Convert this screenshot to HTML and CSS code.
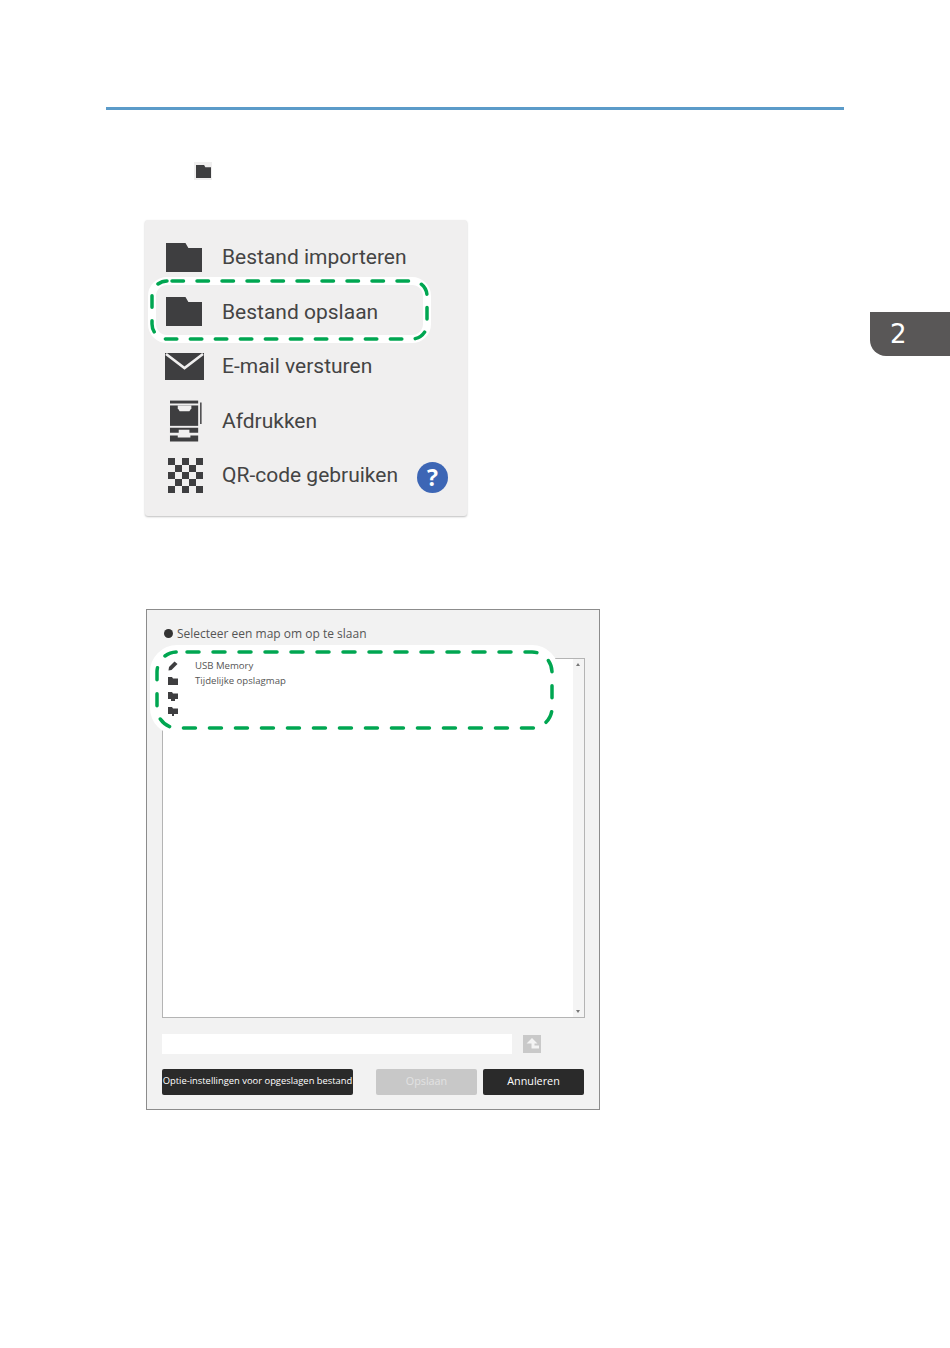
FILE: index.html
```html
<!DOCTYPE html>
<html lang="nl">
<head>
    <meta charset="UTF-8">
    <title>Bestand opslaan</title>
    <link rel="stylesheet" href="styles.css">
</head>
<body>
    <svg class="defs" width="0" height="0">
        <symbol id="folder" viewBox="0 0 37 29" preserveAspectRatio="none">
            <path d="M0 0H20L23 5H37V29H0Z"/>
        </symbol>
    </svg>

    <div class="page">
        <div class="rule"></div>

        <div class="step-icon">
            <svg class="icon-small"><use href="#folder"/></svg>
        </div>

        <div class="menu">
            <div class="menu-row">
                <span class="menu-icon"><svg class="icon-folder"><use href="#folder"/></svg></span>
                <span class="menu-text">Bestand importeren</span>
            </div>
            <div class="menu-row">
                <span class="menu-icon"><svg class="icon-folder"><use href="#folder"/></svg></span>
                <span class="menu-text">Bestand opslaan</span>
            </div>
            <div class="menu-row">
                <span class="menu-icon">
                    <svg class="icon-mail" viewBox="0 0 39 27">
                        <path d="M0 0H39V27H0Z"/>
                        <path d="M1 1L19.5 15L38 1" fill="none" stroke="#f0efef" stroke-width="2.6"/>
                    </svg>
                </span>
                <span class="menu-text">E-mail versturen</span>
            </div>
            <div class="menu-row">
                <span class="menu-icon">
                    <svg class="icon-print" viewBox="0 0 36 42">
                        <path d="M1 0H30V3H1Z"/>
                        <path d="M1 5H30V26H1Z"/>
                        <path d="M9 5H23V8L21 11H11L9 8Z" fill="#f0efef"/>
                        <path d="M32 2H33.5V24H32Z"/>
                        <path d="M1 28H30V33H21V30H10V33H1Z"/>
                        <path d="M1 36H9V38H22V36H30V42H1Z"/>
                    </svg>
                </span>
                <span class="menu-text">Afdrukken</span>
            </div>
            <div class="menu-row">
                <span class="menu-icon">
                    <svg class="icon-qr" viewBox="0 0 5 5">
                        <path d="M0 0H1V1H0ZM2 0H3V1H2ZM4 0H5V1H4ZM1 1H2V2H1ZM3 1H4V2H3ZM0 2H1V3H0ZM2 2H3V3H2ZM4 2H5V3H4ZM1 3H2V4H1ZM3 3H4V4H3ZM0 4H1V5H0ZM2 4H3V5H2ZM4 4H5V5H4Z"/>
                    </svg>
                </span>
                <span class="menu-text">QR-code gebruiken</span>
                <span class="help">?</span>
            </div>
        </div>

        <div class="dialog">
            <div class="dialog-title"><span class="dot"></span>Selecteer een map om op te slaan</div>
            <div class="list">
                <div class="list-items">
                    <div class="list-row">
                        <svg class="row-icon" viewBox="0 0 10 10"><path d="M6.5 0.5L9.5 3L3.5 9L0.5 9.5L1 6Z"/></svg>
                        <span class="row-text">USB Memory</span>
                    </div>
                    <div class="list-row">
                        <svg class="row-icon" viewBox="0 0 10 8"><path d="M0 0H4L5 1.5H10V8H0Z"/></svg>
                        <span class="row-text">Tijdelijke opslagmap</span>
                    </div>
                    <div class="list-row">
                        <svg class="row-icon" viewBox="0 0 10 10"><path d="M0 1H4L5 2.5H10V8H7V10H3V8H0Z"/></svg>
                    </div>
                    <div class="list-row">
                        <svg class="row-icon" viewBox="0 0 10 10"><path d="M0 1H4L5 2.5H10V8H6V10H4V8H0Z"/></svg>
                    </div>
                </div>
                <div class="scrollbar">
                    <span class="arrow-up"></span>
                    <span class="arrow-down"></span>
                </div>
            </div>
            <div class="path-row">
                <div class="path-input"></div>
                <div class="up-btn">
                    <svg viewBox="0 0 18 18"><path d="M9 3L14.5 8.5H11.5V10.5H16V13.5H8.5V8.5H3.5Z" fill="#f4f4f4"/></svg>
                </div>
            </div>
            <div class="btn-row">
                <div class="btn btn-options">Optie-instellingen voor opgeslagen bestand</div>
                <div class="btn btn-off">Opslaan</div>
                <div class="btn btn-cancel">Annuleren</div>
            </div>
        </div>

        <svg class="mark mark-menu" width="289" height="72" viewBox="0 0 289 72">
            <rect class="halo" x="7" y="7" width="275" height="58" rx="15"/>
            <rect class="dash" x="7" y="7" width="275" height="58" rx="15"/>
        </svg>
        <svg class="mark mark-list" width="409" height="90" viewBox="0 0 409 90">
            <rect class="halo" x="7" y="7" width="395" height="76" rx="20"/>
            <rect class="dash" x="7" y="7" width="395" height="76" rx="20"/>
        </svg>

        <div class="chapter-tab">2</div>
    </div>
</body>
</html>
```

FILE: styles.css
```css
body {
    margin: 0;
    background-color: #fff;
    font-family: "Open Sans", "Noto Sans", sans-serif;
}

.defs {
    position: absolute;
}

.page {
    position: relative;
    width: 950px;
    height: 1348px;
    overflow: hidden;
    padding-top: 107px;
    box-sizing: border-box;
}

.rule {
    height: 3px;
    margin: 0 106px;
    background-color: #5b9bc9;
}

.step-icon {
    display: flex;
    align-items: center;
    justify-content: center;
    width: 18px;
    height: 18px;
    margin: 52px 0 0 194px;
    background-color: #f0efef;
}

.icon-small {
    width: 15px;
    height: 13px;
    fill: #3e3e40;
}

.menu {
    width: 322px;
    height: 296px;
    margin: 40px 0 0 145px;
    padding-top: 10px;
    box-sizing: border-box;
    background-color: #f0efef;
    border-radius: 3px;
    box-shadow: 0 1px 2px rgba(0, 0, 0, 0.25);
}

.menu-row {
    display: flex;
    align-items: center;
    height: 54.5px;
}

.menu-icon {
    display: flex;
    justify-content: center;
    width: 40px;
    margin-left: 19px;
    margin-right: 18px;
    fill: #3e3e40;
}

.icon-folder {
    width: 36px;
    height: 29px;
}

.icon-mail {
    width: 39px;
    height: 27px;
}

.icon-print {
    width: 36px;
    height: 42px;
    margin-left: 5px;
}

.icon-qr {
    width: 35px;
    height: 35px;
    margin-left: 2px;
}

.menu-text {
    width: 183px;
    font-family: Roboto, "Open Sans", sans-serif;
    font-size: 21px;
    white-space: nowrap;
    color: #444;
}

.help {
    width: 31px;
    height: 31px;
    margin: 4px 0 0 12px;
    border-radius: 50%;
    background-color: #3d66b5;
    color: #fff;
    font-size: 23px;
    font-weight: bold;
    line-height: 31px;
    text-align: center;
}

.dialog {
    width: 454px;
    height: 501px;
    margin: 93px 0 0 146px;
    padding: 15px 14px 0 15px;
    box-sizing: border-box;
    background-color: #f2f2f2;
    border: 1px solid #8c8c8c;
}

.dialog-title {
    display: flex;
    align-items: center;
    height: 16px;
    font-size: 12px;
    color: #555;
}

.dot {
    width: 9px;
    height: 9px;
    margin: 0 4px 0 2px;
    border-radius: 50%;
    background-color: #333;
}

.list {
    display: flex;
    justify-content: space-between;
    height: 360px;
    margin-top: 17px;
    background-color: #fff;
    border: 1px solid #b4b4b4;
    box-sizing: border-box;
}

.list-items {
    margin-top: -1px;
}

.list-row {
    display: flex;
    align-items: center;
    height: 15px;
    margin-left: 5px;
}

.row-icon {
    width: 10px;
    height: 10px;
    fill: #3e3e40;
}

.row-text {
    margin-left: 17px;
    font-size: 9.6px;
    color: #555;
}

.scrollbar {
    position: relative;
    width: 11px;
    background-color: #f4f4f4;
}

.arrow-up, .arrow-down {
    position: absolute;
    left: 3px;
    width: 0;
    height: 0;
    border-left: 2px solid transparent;
    border-right: 2px solid transparent;
}

.arrow-up {
    top: 4px;
    border-bottom: 3px solid #777;
}

.arrow-down {
    bottom: 4px;
    border-top: 3px solid #777;
}

.path-row {
    display: flex;
    align-items: center;
    margin-top: 16px;
}

.path-input {
    width: 350px;
    height: 20px;
    background-color: #fff;
}

.up-btn {
    width: 18px;
    height: 18px;
    margin-left: 11px;
    background-color: #c9c9c9;
}

.up-btn svg {
    display: block;
}

.btn-row {
    display: flex;
    margin-top: 15px;
}

.btn {
    display: flex;
    align-items: center;
    justify-content: center;
    height: 26px;
    padding-bottom: 3px;
    box-sizing: border-box;
    border-radius: 2px;
    color: #fff;
    white-space: nowrap;
    background-color: #2a2a2a;
    font-size: 10.8px;
}

.btn-options {
    width: 191px;
    font-size: 9.4px;
}

.btn-off {
    width: 101px;
    margin-left: 23px;
    background-color: #c8c8c8;
    color: #e2e2e2;
}

.btn-cancel {
    width: 101px;
    margin-left: 6px;
}

.mark {
    position: absolute;
}

.mark rect {
    fill: none;
}

.mark .halo {
    stroke: #fff;
}

.mark .dash {
    stroke: #00a651;
    stroke-width: 3.5;
    stroke-linecap: round;
}

.mark-menu {
    left: 145px;
    top: 274px;
}

.mark-menu .halo {
    stroke-width: 8;
}

.mark-menu .dash {
    stroke-dasharray: 11.5 13.5;
    stroke-dashoffset: -5;
}

.mark-list {
    left: 150px;
    top: 645px;
}

.mark-list .halo {
    stroke-width: 14;
}

.mark-list .dash {
    stroke-dasharray: 12 14;
    stroke-dashoffset: -10;
}

.chapter-tab {
    position: absolute;
    left: 870px;
    top: 312px;
    width: 80px;
    height: 44px;
    padding-left: 20px;
    box-sizing: border-box;
    background-color: #595757;
    border-bottom-left-radius: 16px;
    color: #fff;
    font-family: "DejaVu Sans", sans-serif;
    font-size: 26px;
    line-height: 44px;
}
```
